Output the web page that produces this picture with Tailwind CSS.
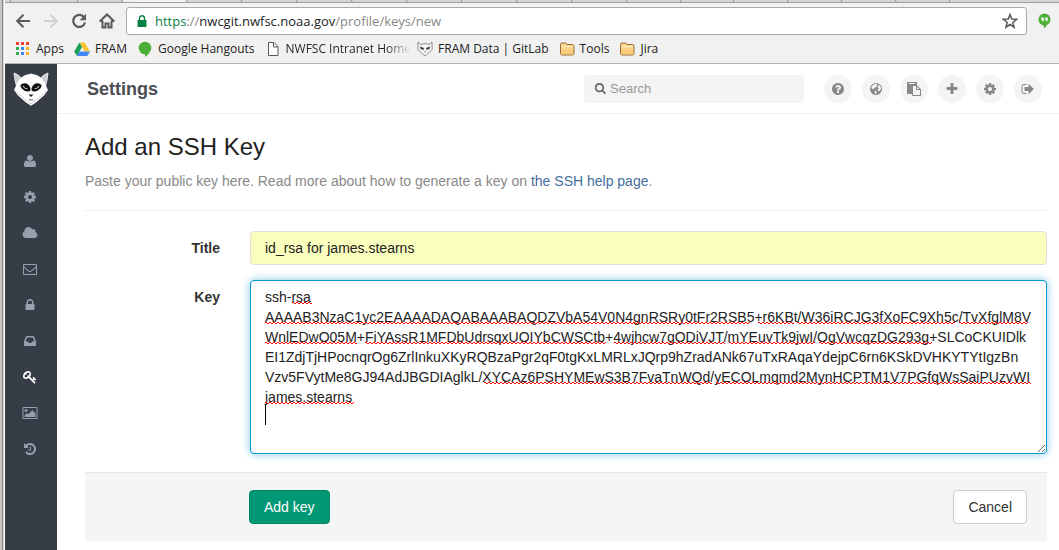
<!DOCTYPE html>
<html lang="en">
<head>
<meta charset="utf-8">
<title>Add an SSH Key</title>
<script src="https://cdn.jsdelivr.net/npm/@tailwindcss/browser@4"></script>
</head>
<body class="flex min-h-screen bg-white font-['Liberation_Sans',Arial,sans-serif] text-sm text-[#333]">

<!-- icon sprite -->
<svg class="hidden" aria-hidden="true">
  <symbol id="cog" viewBox="0 0 1792 1792"><path d="M1152 896q0-106-75-181t-181-75-181 75-75 181 75 181 181 75 181-75 75-181zm512-109v222q0 12-8 23t-20 13l-185 28q-19 54-39 91 35 50 107 138 10 12 10 25t-9 23q-27 37-99 108t-94 71q-12 0-26-9l-138-108q-44 23-91 38-16 136-29 186-7 28-36 28h-222q-14 0-24.500-8.500t-11.500-21.500l-28-184q-49-16-90-37l-141 107q-10 9-25 9-14 0-25-11-126-114-165-168-7-10-7-23 0-12 8-23 15-21 51-66.500t54-70.500q-27-50-41-99l-183-27q-13-2-21-12.500t-8-23.500v-222q0-12 8-23t19-13l186-28q14-46 39-92-40-57-107-138-10-12-10-24 0-10 9-23 26-36 98.500-107.500t94.500-71.500q13 0 26 10l138 107q44-23 91-38 16-136 29-186 7-28 36-28h222q14 0 24.500 8.500t11.500 21.500l28 184q49 16 90 37l142-107q9-9 24-9 13 0 25 10 129 119 165 170 7 8 7 22 0 12-8 23-15 21-51 66.500t-54 70.500q26 50 41 98l183 28q13 2 21 12.500t8 23.500z"/></symbol>
  <symbol id="folder" viewBox="0 0 16 16"><path d="M1.500 3.500q0-1.500 1.500-1.500h3.500q1 0 1.300 1l.2.500h5.500q1.500 0 1.500 1.500v7.500q0 1.500-1.500 1.500h-10.500q-1.500 0-1.500-1.500z" fill="#fbd48a" stroke="#9a6a3a"/><path d="M2.500 5.500h11.500" stroke="#fff1c8"/><path d="M2 9h12v4.500h-12z" fill="#f5c26b" opacity=".5"/></symbol>
</svg>

<!-- window frame -->
<div class="w-[5px] shrink-0 border-l-2 border-[#c9c5c2] bg-[#8c8683]"><div class="ml-px h-full border-r border-white bg-[#d8d4d1]"></div></div>

<div class="flex min-w-0 grow flex-col">
  <div class="border-b border-[#b0b0b0] bg-[#f1f1f1] font-['Open_Sans','Noto_Sans',sans-serif]">
    <div class="h-[3px] overflow-hidden border-b border-[#a0a0a0] bg-[#d5d5d5]">
      <svg class="h-[3px] w-[1054px]" viewBox="0 0 1054 3" fill="none" stroke="#8a8a8a" aria-hidden="true"><path d="M116 3l1.500-3h64l2 3z" fill="#f1f1f1" stroke="none"/><path d="M4 3l2-3M72 0l2 3M116 3l1.500-3M181 0l2 3M236 0l2 3M291 0l2 3M346 0l2 3M401 0l2 3M456 0l2 3M511 0l2 3M566 0l2 3M621 0l2 3M675 0l2 3M728 0l2 3M782 0l2 3M836 0l2 3M890 0l2 3M944 0l2 3"/></svg>
    </div>
    <div class="flex items-center gap-3 pt-1 pr-2 pl-[10px] text-[#5a5a5a]">
      <button type="button" aria-label="Back"><svg class="size-4" viewBox="0 0 16 16" fill="none" stroke="currentColor" stroke-width="2"><path d="M15 8H2.500M8.500 1.700L2.200 8l6.300 6.300"/></svg></button>
      <button type="button" aria-label="Forward" class="text-[#cfcfcf]"><svg class="size-4" viewBox="0 0 16 16" fill="none" stroke="currentColor" stroke-width="2"><path d="M1 8h12.500M7.500 1.700L13.800 8l-6.300 6.300"/></svg></button>
      <button type="button" aria-label="Reload"><svg class="size-4" viewBox="0 0 16 16" fill="none" stroke="currentColor" stroke-width="2.200"><path d="M13 4.300A6 6 0 1 0 14 9.500"/><path d="M15 .8v6.400H8.600z" fill="currentColor" stroke="none"/></svg></button>
      <button type="button" aria-label="Home"><svg class="size-4" viewBox="0 0 16 16" fill="none" stroke="currentColor" stroke-width="2"><path d="M.7 8.500L8 1.500l7.300 7M3.500 7.500v7h3v-4h3v4h3v-7"/></svg></button>
      <div class="-ml-px flex h-7 grow items-center rounded-[3px] border border-[#a9a9a9] bg-white pr-2 pl-[10px]">
        <svg class="mr-2 h-3 w-[10px]" viewBox="0 0 10 12" aria-hidden="true"><path d="M1 5h8q.5 0 .5.500v6q0 .5-.5.500h-8q-.5 0-.5-.500v-6q0-.5.500-.5z" fill="#0b8043"/><path d="M2.500 5V3.200a2.500 2.500 0 0 1 5 0V5" fill="none" stroke="#0b8043" stroke-width="1.400"/></svg>
        <div class="grow text-[13px] whitespace-nowrap text-[#888]"><span class="text-[#0b8043]">https</span>://<span class="text-[#222]">nwcgit.nwfsc.noaa.gov</span>/profile/keys/new</div>
        <button type="button" aria-label="Bookmark this page"><svg class="size-4" viewBox="0 0 16 16" fill="none" stroke="#5a5a5a" stroke-width="1.500"><path d="M8 1.500l1.700 4.600 4.900.2-3.800 3.100 1.300 4.800L8 11.500l-4.100 2.700 1.300-4.800L1.400 6.300l4.900-.2z"/></svg></button>
      </div>
      <svg class="-ml-px h-4 w-[13px]" viewBox="0 0 13 16" aria-hidden="true"><circle cx="6.500" cy="6.500" r="6" fill="#4cae36"/><path d="M5 11h4.500L6.500 15.500z" fill="#4cae36"/><path d="M3.300 4.500h2.500v3l-1.200 1.700V7.300H3.300zM7.200 4.500h2.500v3L8.500 9.200V7.300H7.200z" fill="#fff"/></svg>
    </div>
    <nav aria-label="Bookmarks" class="flex h-7 items-center gap-[10px] pl-[10px] text-xs whitespace-nowrap text-[#222]">
      <a href="#" class="flex items-center gap-[5px]"><svg class="size-4" viewBox="0 0 16 16"><path d="M1 1h3v3H1zM6 1h3v3H6zM11 1h3v3h-3z" fill="#ea4335"/><path d="M1 6h3v3H1zM1 11h3v3H1z" fill="#34a853"/><path d="M6 6h3v3H6zM6 11h3v3H6z" fill="#4285f4"/><path d="M11 6h3v3h-3zM11 11h3v3h-3z" fill="#fbb116"/></svg>Apps</a>
      <a href="#" class="flex items-center gap-[5px]"><svg class="size-4" viewBox="0 0 16 16"><path d="M5.500 1.500h5l5.500 9h-5.200z" fill="#fbc02d"/><path d="M5.500 1.500L8 6l-5 9-2.800-4.500z" fill="#1b9e5a"/><path d="M5.500 10.500H16L13.300 15H3z" fill="#4285f4"/></svg>FRAM</a>
      <a href="#" class="flex items-center gap-[5px]"><svg class="size-4" viewBox="0 0 16 16"><circle cx="8" cy="7" r="6.300" fill="#4cae36"/><path d="M7.500 12h4.800L8.500 16z" fill="#4cae36"/></svg>Google Hangouts</a>
      <a href="#" class="-mr-1 flex items-center gap-[5px]"><svg class="size-4" viewBox="0 0 16 16" fill="#fff" stroke="#5a5a5a"><path d="M3.500 1.500h5.500l4 4v9h-9.500zM8.500 1.500v4.500H13"/></svg><span class="bg-linear-to-r from-[#222] from-80% to-transparent bg-clip-text text-transparent">NWFSC Intranet Home</span></a>
      <a href="#" class="flex items-center gap-[5px]"><svg class="size-4" viewBox="0 0 16 16" fill="#f4f4f4" stroke="#777" stroke-width=".8"><path d="M1 1l3 2.500q4-2 8 0L15 1v4.500l.3 3L8 15 .7 8.500l.3-3z"/><path d="M3 5.500l4 1.500-.5 2-3-1zM13 5.500L9 7l.5 2 3-1zM7 10.500h2l-1 1z" fill="#444" stroke="none"/></svg>FRAM Data | GitLab</a>
      <a href="#" class="flex items-center gap-[5px]"><svg class="size-4"><use href="#folder"/></svg>Tools</a>
      <a href="#" class="flex items-center gap-[5px]"><svg class="size-4"><use href="#folder"/></svg>Jira</a>
    </nav>
  </div>

  <div class="flex grow">
    <aside class="flex w-[52px] shrink-0 flex-col bg-[#373d47] text-[#98a0ae]">
      <a href="#" aria-label="Dashboard" class="flex h-[79px] justify-center pt-[7px]">
        <svg class="h-9 w-[36px]" viewBox="0 0 36 36"><path d="M1 2q5 1.500 8 6l-4 3q-1 2-1.500 4Q1.500 9 1 2zM35 2q-5 1.500-8 6l4 3q1 2 1.500 4Q34.500 9 35 2z" fill="#c9ccd1" stroke="#fff" stroke-width=".8"/><path d="M18 2.500q1.500 1 3 .8 8 1.700 11 9.200l3 6.500-3.500 5-8.500 7.500-5 3.300-5-3.300L4.500 24 1 19l3-6.500q3-7.500 11-9.200 1.500.2 3-.8z" fill="#fff"/><path d="M2.500 20.500L18 33l15.500-12.500" fill="none" stroke="#8d929b" stroke-width=".9" stroke-dasharray="1 1"/><path d="M7.500 14q2-2.500 6-1.500 3.500 1.500 4 5.500.2 2.500-2.500 2.500-4-.3-6.300-3Q7.200 15.500 7.500 14zM28.500 14q-2-2.500-6-1.500-3.500 1.500-4 5.500-.2 2.500 2.500 2.500 4-.3 6.300-3 1.500-2 1.200-3.500z" fill="#111"/><path d="M9.500 14.500l5.500 3.500q-4 .2-5.500-3.500zM26.500 14.500L21 18q4 .2 5.500-3.500z" fill="#fff"/><circle cx="12.500" cy="16.200" r=".9" fill="#111"/><circle cx="23.500" cy="16.200" r=".9" fill="#111"/><path d="M15.500 23.500h5L18 26zM16 28.500h4v.8h-4z" fill="#222"/></svg>
      </a>
      <nav aria-label="Profile settings" class="flex flex-col">
        <a href="#" aria-label="Profile" class="flex h-9 items-center justify-center pr-[2px]"><svg class="size-[14px] fill-current" viewBox="0 0 1792 1792"><path d="M1664 1399q0 109-62.500 187t-150.500 78h-1110q-88 0-150.500-78t-62.500-187q0-85 8.500-160.500t31.500-152 58.500-131 94-89 134.500-34.500q131 128 441 128t441-128q76 0 134.500 34.500t94 89 58.500 131 31.500 152 8.500 160.500zm-384-887q0 159-112.500 271.500t-271.500 112.500-271.500-112.500-112.500-271.500 112.500-271.500 271.500-112.500 271.500 112.500 112.500 271.500z"/></svg></a>
        <a href="#" aria-label="Account" class="flex h-9 items-center justify-center pr-[2px]"><svg class="size-[14px] fill-current"><use href="#cog"/></svg></a>
        <a href="#" aria-label="Applications" class="flex h-9 items-center justify-center pr-[2px]"><svg class="h-[14px] w-4 fill-current" viewBox="-64 0 1920 1792"><path d="M1856 1152q0 159-112.500 271.500t-271.500 112.500h-1088q-185 0-316.500-131.500t-131.500-316.500q0-132 71-241.500t187-163.500q-2-28-2-43 0-212 150-362t362-150q158 0 286.500 88t187.500 230q70-62 166-62 106 0 181 75t75 181q0 75-41 138 129 30 213 134.500t84 239.500z"/></svg></a>
        <a href="#" aria-label="Emails" class="flex h-9 items-center justify-center pr-[2px]"><svg class="size-[14px] fill-current" viewBox="0 0 1792 1792"><path d="M1664 1504v-768q-32 36-69 66-268 206-426 338-51 43-83 67t-86.500 48.500-102.500 24.500h-2q-48 0-102.500-24.500t-86.500-48.500-83-67q-158-132-426-338-37-30-69-66v768q0 13 9.500 22.500t22.500 9.500h1472q13 0 22.500-9.500t9.500-22.500zm0-1051v-24.500l-.5-13-3-12.500-5.500-9-9-7.500-14-2.500h-1472q-13 0-22.500 9.500t-9.500 22.500q0 168 147 284 193 152 401 317 6 5 35 29.500t46 37.500 44.500 31.500 50.500 27.500 43 9h2q20 0 43-9t50.500-27.500 44.500-31.500 46-37.500 35-29.500q208-165 401-317 54-43 100.500-115.500t46.500-131.500zm128-37v1088q0 66-47 113t-113 47h-1472q-66 0-113-47t-47-113v-1088q0-66 47-113t113-47h1472q66 0 113 47t47 113z"/></svg></a>
        <a href="#" aria-label="Password" class="flex h-9 items-center justify-center pr-[2px]"><svg class="size-[14px] fill-current" viewBox="0 0 1792 1792"><path d="M640 768h512v-192q0-106-75-181t-181-75-181 75-75 181v192zm832 96v576q0 40-28 68t-68 28h-960q-40 0-68-28t-28-68v-576q0-40 28-68t68-28h32v-192q0-184 132-316t316-132 316 132 132 316v192h32q40 0 68 28t28 68z"/></svg></a>
        <a href="#" aria-label="Notifications" class="flex h-9 items-center justify-center pr-[2px]"><svg class="size-[14px] fill-current" viewBox="0 0 1792 1792"><path d="M1151 960h316q-1-3-2.500-8t-2.500-8l-212-496h-708l-212 496q-1 2-2.500 8t-2.500 8h316l95 192h320zm513 30v482q0 26-19 45t-45 19h-1408q-26 0-45-19t-19-45v-482q0-62 25-123l238-552q10-25 36.500-42t52.500-17h832q26 0 52.500 17t36.500 42l238 552q25 61 25 123z"/></svg></a>
        <a href="#" aria-label="SSH Keys" aria-current="page" class="flex h-9 items-center justify-center pr-[2px] text-white"><svg class="size-[14px] fill-current" viewBox="0 0 1792 1792"><path d="M832 512q0-80-56-136t-136-56-136 56-56 136q0 42 19 83-41-19-83-19-80 0-136 56t-56 136 56 136 136 56 136-56 56-136q0-42-19-83 41 19 83 19 80 0 136-56t56-136zm851 704q0 17-49 66t-66 49q-9 0-28.500-16t-36.500-33-38.500-40-24.500-26l-96 96 220 220q28 28 28 68 0 42-39 81t-81 39q-40 0-68-28l-671-671q-176 131-365 131-163 0-265.500-102.500t-102.500-265.500q0-160 95-313t248-248 313-95q163 0 265.500 102.500t102.500 265.500q0 189-131 365l355 355 96-96q-3-3-26-24.500t-40-38.500-33-36.500-16-28.500q0-17 49-66t66-49q13 0 23 10 6 6 46 44.500t82 79.500 86.500 86 73 78 28.500 41z"/></svg></a>
        <a href="#" aria-label="Design" class="flex h-9 items-center justify-center pr-[2px]"><svg class="h-[14px] w-4 fill-current" viewBox="-64 0 1920 1792"><path d="M576 576q0 80-56 136t-136 56-136-56-56-136 56-136 136-56 136 56 56 136zm1024 384v448h-1408v-192l320-320 160 160 512-512zm96-704h-1600q-13 0-22.500 9.500t-9.500 22.500v1216q0 13 9.500 22.500t22.500 9.500h1600q13 0 22.500-9.500t9.500-22.500v-1216q0-13-9.500-22.500t-22.500-9.500zm160 32v1216q0 66-47 113t-113 47h-1600q-66 0-113-47t-47-113v-1216q0-66 47-113t113-47h1600q66 0 113 47t47 113z"/></svg></a>
        <a href="#" aria-label="History" class="flex h-9 items-center justify-center pr-[2px]"><svg class="size-[14px] fill-current" viewBox="0 0 1792 1792"><path d="M1664 896q0 156-61 298t-164 245-245 164-298 61q-172 0-327-72.500t-264-204.500q-7-10-6.500-22.500t8.500-20.500l137-138q10-9 25-9 16 2 23 12 73 95 179 147t225 52q104 0 198.500-40.500t163.500-109.500 109.500-163.500 40.500-198.500-40.500-198.500-109.500-163.500-163.500-109.500-198.500-40.500q-98 0-188 35.500t-160 101.500l137 138q31 30 14 69-17 40-59 40h-448q-26 0-45-19t-19-45v-448q0-42 40-59 39-17 69 14l130 129q107-101 244.500-156.500t284.500-55.500q156 0 298 61t245 164 164 245 61 298zm-640-288v448q0 14-9 23t-23 9h-320q-14 0-23-9t-9-23v-64q0-14 9-23t23-9h224v-352q0-14 9-23t23-9h64q14 0 23 9t9 23z"/></svg></a>
      </nav>
    </aside>

    <div class="flex min-w-0 grow flex-col">
      <header class="flex h-[50px] items-center border-b border-[#eee] pr-[17px] pl-[30px]">
        <h1 class="grow text-lg font-bold text-[#4c4e54]">Settings</h1>
        <label class="mr-5 flex h-7 w-[220px] items-center gap-1 rounded bg-[#f4f4f4] px-[11px]">
          <svg class="size-[11px] shrink-0 fill-[#666]" viewBox="128 128 1600 1664" aria-hidden="true"><path d="M1216 832q0-185-131.500-316.500t-316.500-131.500-316.500 131.500-131.500 316.500 131.500 316.500 316.500 131.500 316.500-131.500 131.500-316.500zm512 832q0 52-38 90t-90 38q-54 0-90-38l-343-342q-179 124-399 124-143 0-273.500-55.500t-225-150-150-225-55.500-273.500 55.500-273.500 150-225 225-150 273.500-55.500 273.500 55.500 225 150 150 225 55.500 273.500q0 220-124 399l343 343q37 37 37 90z"/></svg>
          <input type="search" aria-label="Search" placeholder="Search" class="h-7 w-full min-w-0 bg-transparent text-[13px] outline-none placeholder:text-[#999]">
        </label>
        <nav aria-label="Main" class="flex gap-[10px] text-[#888]">
          <a href="#" aria-label="Help" class="flex size-7 items-center justify-center rounded-full bg-[#f4f4f4]"><svg class="size-[14px] fill-current" viewBox="0 0 1792 1792"><path d="M1024 1376v-192q0-14-9-23t-23-9h-192q-14 0-23 9t-9 23v192q0 14 9 23t23 9h192q14 0 23-9t9-23zm256-672q0-88-55.500-163t-138.500-116-170-41q-243 0-371 213-15 24 8 42l132 100q7 6 19 6 16 0 25-12 53-68 86-92 34-24 86-24 48 0 85.500 26t37.500 59q0 38-20 61t-68 45q-63 28-115.500 86.500t-52.500 125.500v36q0 14 9 23t23 9h192q14 0 23-9t9-23q0-19 21.500-49.500t54.500-49.500q32-18 49-28.500t46-35 44.500-48 28-60.500 12.500-81zm384 192q0 209-103 385.500t-279.500 279.500-385.500 103-385.500-103-279.500-279.500-103-385.500 103-385.500 279.500-279.500 385.500-103 385.500 103 279.500 279.500 103 385.500z"/></svg></a>
          <a href="#" aria-label="Explore" class="flex size-7 items-center justify-center rounded-full bg-[#f4f4f4]"><svg class="size-[14px]" viewBox="0 0 14 14"><circle cx="7" cy="7" r="6" fill="currentColor"/><path d="M4.500 2.500L7 1.700l1.500.6-1 1.200.6.900-1.700.8-.8 1.300-1.300-.2.300 1.400-1.600-.9-.8-1.600zM9.500 2.500l1.800 1.700.9 2.300-1.400 2.300-1.700.5-.4-1.500 1-1.500-1-1.200.4-1.200zM6 8.500l1.800.9-.3 1.500-1.200 1.400-.6-1.700z" fill="#f4f4f4"/></svg></a>
          <a href="#" aria-label="Snippets" class="flex size-7 items-center justify-center rounded-full bg-[#f4f4f4]"><svg class="size-[14px] fill-current" viewBox="0 0 1792 1792"><path d="M768 1664h896v-640h-416q-40 0-68-28t-28-68v-416h-384v1152zm256-1440v-64q0-13-9.500-22.500t-22.500-9.500h-704q-13 0-22.500 9.500t-9.500 22.500v64q0 13 9.500 22.500t22.500 9.500h704q13 0 22.500-9.500t9.500-22.500zm256 672h299l-299-299v299zm512 128v672q0 40-28 68t-68 28h-960q-40 0-68-28t-28-68v-160h-544q-40 0-68-28t-28-68v-1344q0-40 28-68t68-28h1088q40 0 68 28t28 68v328q21 13 36 28l408 408q28 28 48 76t20 88z"/></svg></a>
          <a href="#" aria-label="New project" class="flex size-7 items-center justify-center rounded-full bg-[#f4f4f4]"><svg class="size-[14px] fill-current" viewBox="0 0 1792 1792"><path d="M1600 736v192q0 40-28 68t-68 28h-416v416q0 40-28 68t-68 28h-192q-40 0-68-28t-28-68v-416h-416q-40 0-68-28t-28-68v-192q0-40 28-68t68-28h416v-416q0-40 28-68t68-28h192q40 0 68 28t28 68v416h416q40 0 68 28t28 68z"/></svg></a>
          <a href="#" aria-label="Profile settings" class="flex size-7 items-center justify-center rounded-full bg-[#f4f4f4]"><svg class="size-[14px] fill-current"><use href="#cog"/></svg></a>
          <a href="#" aria-label="Sign out" class="flex size-7 items-center justify-center rounded-full bg-[#f4f4f4]"><svg class="size-[14px] fill-current" viewBox="0 0 1792 1792"><path d="M704 1440q0 4 1 20t.5 26.500-3 23.500-10 19.500-20.500 6.500h-320q-119 0-203.500-84.500t-84.500-203.500v-704q0-119 84.500-203.500t203.500-84.500h320q13 0 22.500 9.500t9.500 22.500q0 4 1 20t.5 26.500-3 23.500-10 19.500-20.500 6.500h-320q-66 0-113 47t-47 113v704q0 66 47 113t113 47h312l11.500 1 11.500 3 8 5.500 7 9 2 13.500zm928-544q0 26-19 45l-544 544q-19 19-45 19t-45-19-19-45v-288h-448q-26 0-45-19t-19-45v-384q0-26 19-45t45-19h448v-288q0-26 19-45t45-19 45 19l544 544q19 19 19 45z"/></svg></a>
        </nav>
      </header>

      <main class="pt-[17px] pr-3 pl-7">
        <h2 class="text-2xl text-[#222]">Add an SSH Key</h2>
        <p class="mt-2 leading-5 text-[#888]">Paste your public key here. Read more about how to generate a key on <a href="#" class="text-[#446e9b]">the SSH help page</a>.</p>
        <hr class="mt-[19px] border-[#eee]">
        <form class="mt-5">
          <div class="flex">
            <label for="title" class="w-[165px] shrink-0 pt-[7px] pr-[30px] text-right leading-5 font-bold">Title</label>
            <input id="title" type="text" value="id_rsa for james.stearns" class="h-[34px] min-w-0 grow rounded border border-[#ddd] bg-[#faffbd] px-[14px] text-sm text-[#222]">
          </div>
          <div class="mt-[15px] flex">
            <label for="key" class="w-[165px] shrink-0 pt-[7px] pr-[30px] text-right leading-5 font-bold">Key</label>
            <div class="relative flex min-w-0 grow">
              <textarea id="key" wrap="off" spellcheck="false" class="h-[174px] w-full resize-y overflow-hidden rounded border border-[#0098d0] bg-white px-[14px] py-[6px] text-sm leading-5 text-[#222] shadow-[0_0_8px_rgba(0,152,208,0.5)] outline-none">ssh-rsa
AAAAB3NzaC1yc2EAAAADAQABAAABAQDZVbA54V0N4gnRSRy0tFr2RSB5+r6KBt/W36iRCJG3fXoFC9Xh5c/TvXfglM8V
WnlEDwO05M+FiYAssR1MFDbUdrsqxUOIYbCWSCtb+4wjhcw7gODiVJT/mYEuvTk9jwI/OgVwcqzDG293g+SLCoCKUIDlk
EI1ZdjTjHPocnqrOg6ZrlInkuXKyRQBzaPgr2qF0tgKxLMRLxJQrp9hZradANk67uTxRAqaYdejpC6rn6KSkDVHKYTYtIgzBn
Vzv5FVytMe8GJ94AdJBGDIAglkL/XYCAz6PSHYMEwS3B7FvaTnWQd/yECOLmqmd2MynHCPTM1V7PGfqWsSaiPUzvWI
james.stearns
</textarea>
              <!-- spelling marks and text caret -->
              <svg class="pointer-events-none absolute top-[7px] left-[15px] h-[140px] w-[768px]" viewBox="0 0 768 140" aria-hidden="true" fill="none">
                <g stroke="#ff0000" stroke-width="1">
                  <path id="marks" stroke-dasharray="2 2" d="M27 15.500h20M0 35.500h485M493 35.500h36M532 35.500h158M694 35.500h69M0 55.500h92M100 55.500h241M349 55.500h111M464 55.500h86M554 55.500h113M219 95.500h228M451 95.500h315M0 115.500h89"/>
                  <path stroke-dasharray="2 2" stroke-dashoffset="2" d="M27 16.500h20M0 36.500h485M493 36.500h36M532 36.500h158M694 36.500h69M0 56.500h92M100 56.500h241M349 56.500h111M464 56.500h86M554 56.500h113M219 96.500h228M451 96.500h315M0 116.500h89"/>
                </g>
                <path d="M0 117h1v21H0z" fill="#000"/>
              </svg>
            </div>
          </div>
          <div class="mt-[18px] flex justify-between border-t border-[#e5e5e5] bg-[#f5f5f5] py-[17px] pr-5 pl-[164px]">
            <button type="submit" class="h-[34px] rounded border border-[#00875f] bg-[#019875] px-[14px] text-sm text-white">Add key</button>
            <button type="button" class="h-[34px] rounded border border-[#ccc] bg-white px-[14px] text-sm text-[#333]">Cancel</button>
          </div>
        </form>
      </main>
    </div>
  </div>
</div>
</body>
</html>
